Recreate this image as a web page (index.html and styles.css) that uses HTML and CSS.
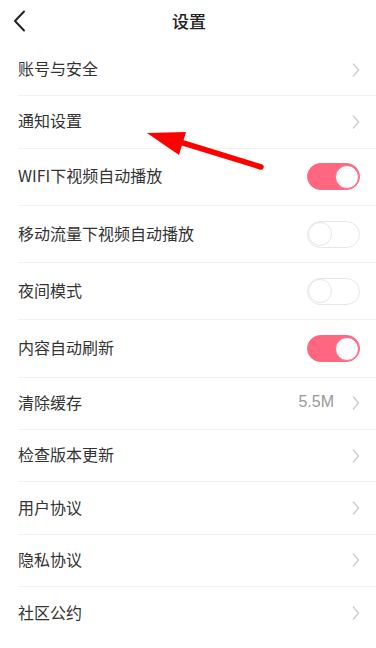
FILE: index.html
```html
<!DOCTYPE html>
<html lang="zh-CN">
<head>
  <meta charset="UTF-8">
  <meta name="viewport" content="width=device-width, initial-scale=1.0">
  <title>设置</title>
  <link rel="stylesheet" href="styles.css">
</head>
<body>

  <div class="header">
    <svg class="back" width="14" height="22" viewBox="0 0 14 22">
      <path d="M11 1.5 L2 11 L11 20.5" fill="none" stroke="#222" stroke-width="2" stroke-linecap="round" stroke-linejoin="round"/>
    </svg>
    <h1>设置</h1>
  </div>

  <div class="list">
    <div class="row">
      <span class="label">账号与安全</span>
      <svg class="chev" width="8" height="14" viewBox="0 0 8 14"><path d="M1.5 1 L6.5 7 L1.5 13" fill="none" stroke="#cfcfcf" stroke-width="1.5" stroke-linecap="round" stroke-linejoin="round"/></svg>
    </div>
    <div class="row">
      <span class="label">通知设置</span>
      <svg class="chev" width="8" height="14" viewBox="0 0 8 14"><path d="M1.5 1 L6.5 7 L1.5 13" fill="none" stroke="#cfcfcf" stroke-width="1.5" stroke-linecap="round" stroke-linejoin="round"/></svg>
    </div>
    <div class="row tall">
      <span class="label">WIFI下视频自动播放</span>
      <span class="switch on"><span class="knob"></span></span>
    </div>
    <div class="row tall">
      <span class="label">移动流量下视频自动播放</span>
      <span class="switch"><span class="knob"></span></span>
    </div>
    <div class="row tall">
      <span class="label">夜间模式</span>
      <span class="switch"><span class="knob"></span></span>
    </div>
    <div class="row tall">
      <span class="label">内容自动刷新</span>
      <span class="switch on"><span class="knob"></span></span>
    </div>
    <div class="row">
      <span class="label">清除缓存</span>
      <span class="value">5.5M</span>
      <svg class="chev" width="8" height="14" viewBox="0 0 8 14"><path d="M1.5 1 L6.5 7 L1.5 13" fill="none" stroke="#cfcfcf" stroke-width="1.5" stroke-linecap="round" stroke-linejoin="round"/></svg>
    </div>
    <div class="row">
      <span class="label">检查版本更新</span>
      <svg class="chev" width="8" height="14" viewBox="0 0 8 14"><path d="M1.5 1 L6.5 7 L1.5 13" fill="none" stroke="#cfcfcf" stroke-width="1.5" stroke-linecap="round" stroke-linejoin="round"/></svg>
    </div>
    <div class="row">
      <span class="label">用户协议</span>
      <svg class="chev" width="8" height="14" viewBox="0 0 8 14"><path d="M1.5 1 L6.5 7 L1.5 13" fill="none" stroke="#cfcfcf" stroke-width="1.5" stroke-linecap="round" stroke-linejoin="round"/></svg>
    </div>
    <div class="row">
      <span class="label">隐私协议</span>
      <svg class="chev" width="8" height="14" viewBox="0 0 8 14"><path d="M1.5 1 L6.5 7 L1.5 13" fill="none" stroke="#cfcfcf" stroke-width="1.5" stroke-linecap="round" stroke-linejoin="round"/></svg>
    </div>
    <div class="row">
      <span class="label">社区公约</span>
      <svg class="chev" width="8" height="14" viewBox="0 0 8 14"><path d="M1.5 1 L6.5 7 L1.5 13" fill="none" stroke="#cfcfcf" stroke-width="1.5" stroke-linecap="round" stroke-linejoin="round"/></svg>
    </div>
  </div>

  <!-- red annotation arrow drawn over the list -->
  <svg class="annotation" width="376" height="200" viewBox="0 0 376 200">
    <line x1="180" y1="142" x2="261" y2="167" stroke="#ff0000" stroke-width="5.5" stroke-linecap="round"/>
    <polygon points="147,133 186,132 179,155" fill="#ff0000"/>
  </svg>

</body>
</html>
```

FILE: styles.css
```css
body {
  margin: 0;
  padding: 0;
  background-color: #fff;
  font-family: "Noto Sans CJK SC", "Noto Sans", sans-serif;
  color: #333;
  position: relative;
}

.header {
  height: 44px;
  display: flex;
  align-items: center;
  justify-content: center;
  position: relative;
}

.header h1 {
  margin: 0 0 3px;
  font-size: 17px;
  font-weight: 500;
  color: #222;
  padding-left: 2px;
}

.back {
  position: absolute;
  left: 13px;
  top: 10px;
}

.row {
  height: 52.3px;
  margin-left: 18px;
  padding-right: 16px;
  display: flex;
  align-items: center;
  border-bottom: 1px solid #f2f2f2;
  box-sizing: border-box;
}

.row.tall {
  height: 57.3px;
}

.row:last-child {
  border-bottom: none;
}

.label {
  flex: 1;
  font-size: 16px;
  line-height: 20px;
  margin-bottom: 3px;
}

.value {
  font-family: "Liberation Sans", Arial, sans-serif;
  font-size: 16px;
  color: #999;
  margin-right: 18px;
  margin-bottom: 2px;
}

.chev {
  display: block;
}

.switch {
  width: 53px;
  height: 27px;
  border-radius: 14px;
  box-sizing: border-box;
  border: 1.5px solid #e6e6ea;
  background-color: #fff;
  display: flex;
  align-items: center;
  justify-content: flex-start;
}

.knob {
  width: 24px;
  height: 24px;
  border-radius: 50%;
  background-color: #fff;
  box-sizing: border-box;
  border: 1.5px solid #e6e6ea;
}

.switch.on {
  background-color: #ff6781;
  border-color: #ff6781;
  justify-content: flex-end;
}

.switch.on .knob {
  border-color: #ff6781;
}

.annotation {
  position: absolute;
  left: 0;
  top: 0;
  pointer-events: none;
}
```
